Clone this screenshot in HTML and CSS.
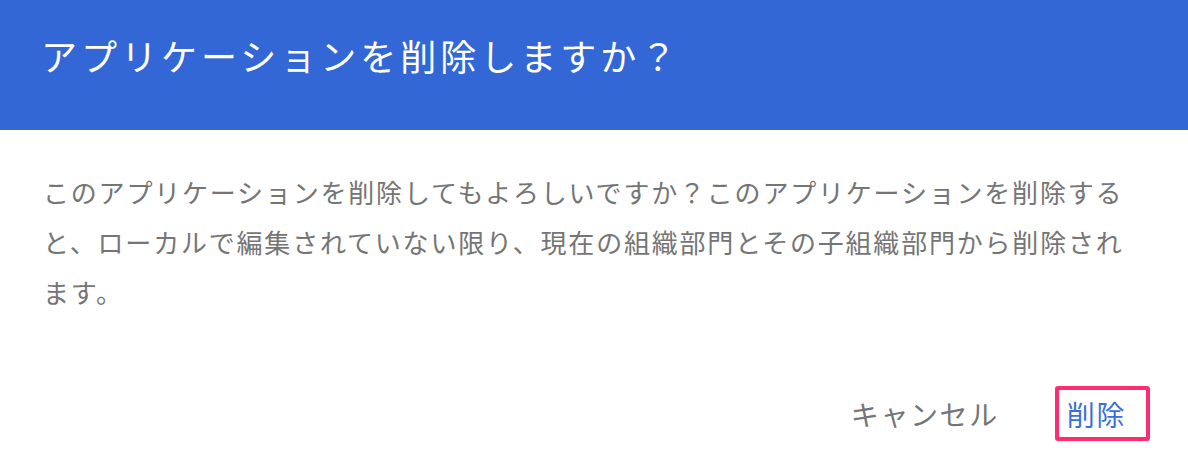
FILE: index.html
```html
<!DOCTYPE html>
<html lang="ja">
<head>
  <meta charset="utf-8">
  <title>アプリケーションを削除</title>
  <link rel="stylesheet" href="styles.css">
</head>
<body>
  <div class="dialog">
    <!-- Cabeçalho -->
    <div class="dialog-head">
      <h1>アプリケーションを削除しますか？</h1>
    </div>

    <!-- Mensagem -->
    <p class="dialog-msg">このアプリケーションを削除してもよろしいですか？このアプリケーションを削除すると、ローカルで編集されていない限り、現在の組織部門とその子組織部門から削除されます。</p>

    <!-- Ações -->
    <div class="actions">
      <button type="button" class="btn btn-cancel">キャンセル</button>
      <button type="button" class="btn btn-delete">削除</button>
    </div>
  </div>
</body>
</html>
```

FILE: styles.css
```css
:root{
  --blue:#3367d6;
  --gray:#757575;
}
body{
  margin:0;
  background:#fff;
  font-family:"Noto Sans CJK JP","Noto Sans",sans-serif;
}
.dialog{
  width:1188px;
  height:458px;
  display:flex;
  flex-direction:column;
}
.dialog-head{
  background:var(--blue);
  height:130px;
  box-sizing:border-box;
  padding:0 0 0 41px;
  display:flex;
  align-items:center;
}
h1{
  margin:0 0 20px;
  color:#fff;
  font-weight:400;
  font-size:36px;
  letter-spacing:4px;
}
.dialog-msg{
  margin:0;
  padding:37px 44px 0 43px;
  color:var(--gray);
  font-size:26px;
  line-height:50px;
  letter-spacing:1.8px;
}
.actions{
  margin-top:auto;
  display:flex;
  justify-content:flex-end;
  align-items:center;
  gap:56px;
  padding:0 38px 17px 0;
}
.btn{
  background:none;
  border:none;
  font-family:inherit;
  font-size:28px;
  letter-spacing:1.6px;
  padding:0;
  cursor:pointer;
}
.btn-cancel{color:var(--gray);}
.btn-delete{
  color:#3a6fd9;
  height:55px;
  box-sizing:border-box;
  border:4px solid #ff2d6f;
  border-radius:3px;
  padding:0 20px 0 8px;
}
```
